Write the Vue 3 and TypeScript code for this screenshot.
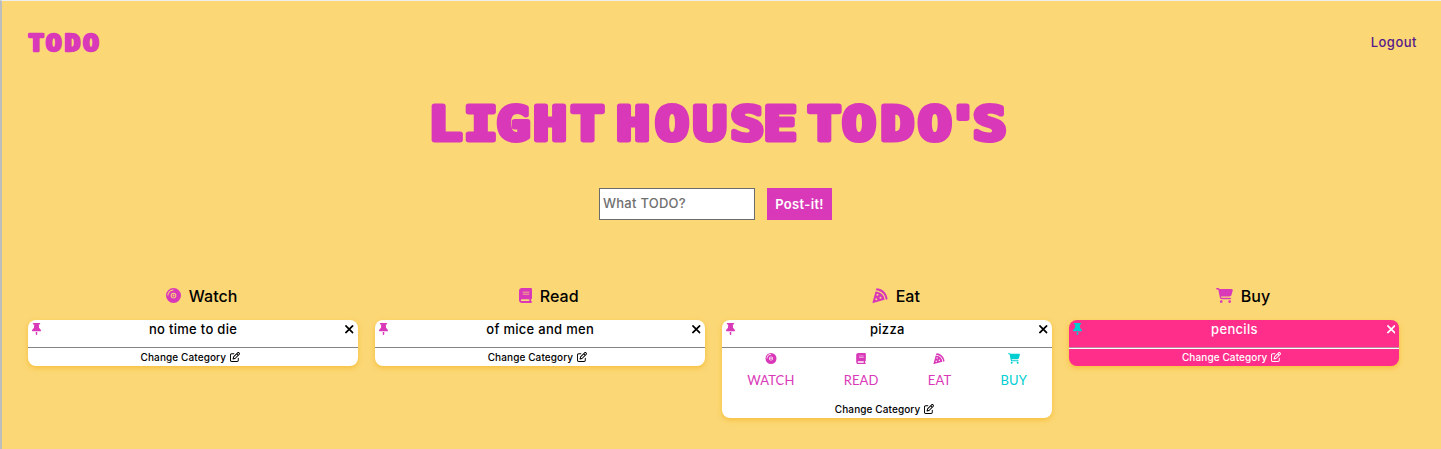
<script setup lang="ts">
type IconName = 'disc' | 'book' | 'pizza' | 'cart' | 'pin' | 'close' | 'edit'

const icons: Record<IconName, { box: string; d: string }> = {
  disc: {
    box: '0 0 512 512',
    d: 'M256 0a256 256 0 1 0 0 512 256 256 0 1 0 0-512zM256 160a96 96 0 1 1 0 192 96 96 0 1 1 0-192zM256 192a64 64 0 1 0 0 128 64 64 0 1 0 0-128zM256 226a30 30 0 1 1 0 60 30 30 0 1 1 0-60zM82 256H50C50 142 142 50 256 50v32C160 82 82 160 82 256z',
  },
  book: {
    box: '0 0 448 512',
    d: 'M96 0C43 0 0 43 0 96v320c0 53 43 96 96 96h320c18 0 32-14 32-32s-14-32-32-32v-64c18 0 32-14 32-32V32c0-18-14-32-32-32H96zM96 384h256v64H96c-18 0-32-14-32-32s14-32 32-32zM128 128h224v28H128zM128 192h224v28H128z',
  },
  pizza: {
    box: '0 0 512 512',
    d: 'M158 8c-18-2-30 10-34 26l-12 44c190 10 328 148 340 326l42-12c14-4 20-16 18-32C490 172 346 28 158 8zM102 120L1 490c-4 14 8 26 22 21l387-106C402 244 268 124 102 120zM128 416a34 34 0 1 1 0-68 34 34 0 1 1 0 68zM168 264a34 34 0 1 1 0-68 34 34 0 1 1 0 68zM272 368a34 34 0 1 1 0-68 34 34 0 1 1 0 68z',
  },
  cart: {
    box: '0 0 576 512',
    d: 'M0 24C0 11 11 0 24 0h46c22 0 41 13 50 32h411c26 0 45 25 38 50l-41 152c-9 32-38 54-71 54H171l5 29c2 11 12 19 24 19h288c13 0 24 11 24 24s-11 24-24 24H200c-35 0-65-25-71-59L77 54c-1-4-4-6-7-6H24C11 48 0 37 0 24zM128 464a48 48 0 1 1 96 0 48 48 0 1 1-96 0zM416 464a48 48 0 1 1 96 0 48 48 0 1 1-96 0z',
  },
  pin: {
    box: '0 0 384 512',
    d: 'M32 32C32 14 46 0 64 0h256c18 0 32 14 32 32s-14 32-32 32h-29l11 148c37 20 66 54 79 95l2 3c3 10 1 20-5 29s-15 13-26 13H32c-10 0-20-5-26-13s-8-19-5-29l1-3c14-41 43-75 80-95L94 64H64c-18 0-32-14-32-32zM160 384h64v96c0 18-14 32-32 32s-32-14-32-32z',
  },
  close: {
    box: '0 0 320 320',
    d: 'M55 9L160 114 265 9Q288-5 310 18T311 55L206 160 311 265Q325 288 302 310T265 311L160 206 55 311Q32 325 10 302T9 265L114 160 9 55Q-5 32 18 10T55 9z',
  },
  edit: {
    box: '0 0 512 512',
    d: 'M441 58.900 453 71c9 9 9 25 0 34l-30 30-47-46 31-30c9-10 25-10 34 0zM210 256L342 123l46 46-132 133c-3 3-7 5-11 6l-51 15 15-51c1-4 3-8 6-11zM373 25L176 222c-9 9-15 19-18 31l-29 100c-2 8 0 17 6 23s15 9 24 6l100-28c12-4 22-10 31-18L487 139c28-28 28-74 0-102l-12-12c-28-28-74-28-102 0zM88 64C39 64 0 103 0 152v272c0 49 39 88 88 88h272c49 0 88-39 88-88V312c0-13-11-24-24-24s-24 11-24 24v112c0 22-18 40-40 40H88c-22 0-40-18-40-40V152c0-22 18-40 40-40h112c13 0 24-11 24-24s-11-24-24-24H88z',
  },
}

interface Column {
  title: string
  icon: IconName
  item: string
  open?: boolean
  hot?: boolean
}

const columns: Column[] = [
  { title: 'Watch', icon: 'disc', item: 'no time to die' },
  { title: 'Read', icon: 'book', item: 'of mice and men' },
  { title: 'Eat', icon: 'pizza', item: 'pizza', open: true },
  { title: 'Buy', icon: 'cart', item: 'pencils', hot: true },
]
</script>

<template>
  <div class="page">
    <header>
      <svg class="logo" width="74" height="22" viewBox="0 0 74 22">
        <text transform="scale(1.15 1)" y="19.500" x="1 16.300 32.600 48.700">TODO</text>
      </svg>
      <a class="logout">Logout</a>
    </header>
    <h1>
      <svg class="title" width="580" height="44" viewBox="0 0 580 44">
        <g transform="scale(1.2 1)">
          <text y="39" x="-1.200 28.300 55.500 86 117.300">LIGHT</text>
          <text y="39" x="155.200 187.700 219.200 250.500 278">HOUSE</text>
          <text y="39" x="314.600 343.500 375.500 406.700 430.300 452.500">TODO'S</text>
        </g>
      </svg>
    </h1>
    <form @submit.prevent>
      <input type="text" placeholder="What TODO?" />
      <button class="post">Post-it!</button>
    </form>
    <main>
      <section v-for="col in columns" :key="col.title">
        <h2>
          <svg :class="['head-icon', col.icon]" :viewBox="icons[col.icon].box"><path fill-rule="evenodd" :d="icons[col.icon].d" /></svg>
          <span>{{ col.title }}</span>
        </h2>
        <article :class="{ hot: col.hot }">
          <div class="top">
            <svg class="pin" :viewBox="icons.pin.box"><path :d="icons.pin.d" /></svg>
            <span class="item">{{ col.item }}</span>
            <svg class="close" :viewBox="icons.close.box"><path :d="icons.close.d" /></svg>
          </div>
          <div v-if="col.open" class="choices">
            <div v-for="c in columns" :key="c.title" :class="['choice', c.icon]">
              <svg :viewBox="icons[c.icon].box"><path fill-rule="evenodd" :d="icons[c.icon].d" /></svg>
              <span>{{ c.title.toUpperCase() }}</span>
            </div>
          </div>
          <div class="change">
            <span>Change Category</span>
            <svg :viewBox="icons.edit.box"><path :d="icons.edit.d" /></svg>
          </div>
        </article>
      </section>
    </main>
  </div>
</template>

<style>
body { margin: 0; overflow: hidden; }
</style>

<style scoped>
* { box-sizing: border-box; }
.page {
  height: 449px;
  background: #fbd775;
  border-left: 2px solid #bdbdbd;
  border-top: 1px solid #eeeeec;
  font-family: Inter, "Open Sans", sans-serif;
  color: #000;
}
svg { fill: currentColor; display: block; flex: none; }
header {
  height: 82px;
  padding: 0 24.500px 0 25px;
  display: flex;
  justify-content: space-between;
  align-items: center;
}
.logo, .title {
  font-family: "DejaVu Sans Mono", monospace;
  font-weight: 700;
  fill: #d939b8;
  stroke: #d939b8;
  stroke-linejoin: round;
  overflow: visible;
}
.logo { font-size: 23px; stroke-width: 2.500px; }
.title { font-size: 46.500px; stroke-width: 5px; }
.logout { color: #551a8b; font-size: 13px; font-weight: 500; letter-spacing: 0.5px; margin-right: -0.5px; }
h1 { margin: 18px 0 0 428px; height: 44px; }
form { margin: 43px 0 0 597px; display: flex; gap: 12px; height: 32px; }
input {
  width: 156px;
  border: 1px solid #6b6b6b;
  border-radius: 0;
  background: #fff;
  padding: 0 3px 2px;
  font: 500 13px Inter, sans-serif;
  letter-spacing: 0.25px;
}
input::placeholder { color: #6f6f6f; opacity: 1; }
.post {
  width: 65px;
  border: 0;
  padding: 0 0 1px;
  background: #d939b8;
  color: #fff;
  font: 600 13px Inter, sans-serif;
  letter-spacing: 0.35px;
}
main { margin: 65px 0 0 26px; width: 1388.500px; display: grid; grid-template-columns: repeat(4, 1fr); align-items: start; }
section { padding-right: 17.500px; }
h2 {
  margin: 0 -17.500px 0 0;
  height: 35px;
  padding-top: 1px;
  display: flex;
  justify-content: center;
  align-items: flex-start;
  gap: 8px;
  font-size: 16px;
  line-height: 20px;
  font-weight: 500;
}
.head-icon { height: 15px; width: 15px; margin-top: 2px; color: #d939b8; }
.head-icon.book { width: 13px; }
.head-icon.cart { width: 17px; }
.head-icon.pizza { width: 16px; }
article {
  background: #fff;
  border-radius: 8px;
  overflow: hidden;
  box-shadow: 0 2px 5px rgba(244, 178, 30, 0.65);
}
.top {
  height: 28px;
  border-bottom: 1px solid #858585;
  padding: 0 4px;
  display: flex;
  justify-content: space-between;
  align-items: flex-start;
}
.pin { width: 9px; height: 12px; margin-top: 3px; color: #d939b8; }
.item { font-size: 13px; line-height: 19px; font-weight: 500; letter-spacing: 0.3px; }
.close { width: 8.500px; height: 8.500px; margin-top: 5px; }
.change {
  height: 18px;
  display: flex;
  justify-content: center;
  align-items: center;
  gap: 4px;
  padding-bottom: 1px;
  margin-right: 5px;
  font-size: 10px;
  font-weight: 500;
  letter-spacing: 0.1px;
}
.change svg { width: 10px; height: 10px; }
.choices { height: 52px; padding: 5px 25px 0; display: flex; justify-content: space-between; color: #d939b8; }
.choice { display: flex; flex-direction: column; align-items: center; }
.choice svg { width: 12px; height: 11px; }
.choice span { font: 400 13px/17px Lato, sans-serif; margin-top: 8px; letter-spacing: 0.1px; }
.choice.cart { color: #00ced1; }
.hot { background: #ff2e8a; color: #fff; }
.hot .pin { color: #00ced1; }
.hot .top { height: 29px; margin-bottom: -1px; border-bottom-color: #fff; box-shadow: inset 0 -1px #b98a9f; }
</style>
